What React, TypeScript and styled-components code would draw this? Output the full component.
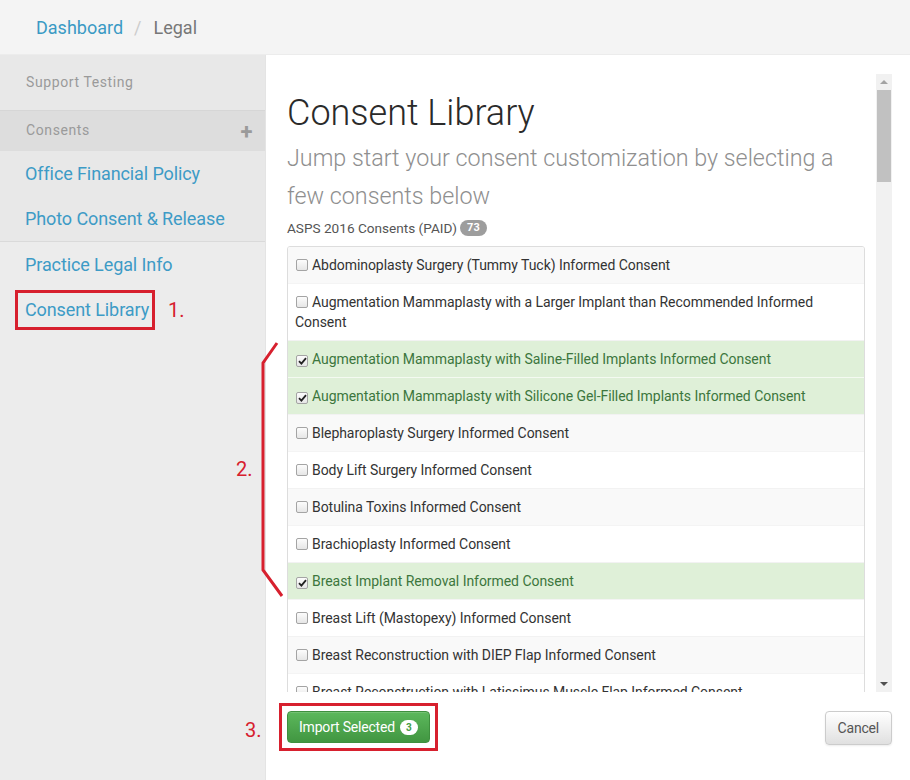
import styled, { createGlobalStyle } from "styled-components";

const GlobalStyle = createGlobalStyle`
  html, body {
    margin: 0;
    padding: 0;
    background: #ffffff;
  }
  body {
    font-family: Roboto, "Liberation Sans", sans-serif;
    color: #333333;
  }
  * {
    box-sizing: border-box;
  }
`;

const annotationRed = "#d7202e";

const Page = styled.div`
  position: relative;
  width: 910px;
  height: 780px;
  overflow: hidden;
  display: flex;
  flex-direction: column;
`;

const TopBar = styled.div`
  height: 55px;
  flex-shrink: 0;
  background: #f4f4f4;
  border-bottom: 1px solid #ececec;
  display: flex;
  align-items: center;
  padding-left: 36px;
  font-size: 18px;
`;

const Crumb = styled.span<{ $active?: boolean }>`
  color: ${(p) => (p.$active ? "#777777" : "#3a9ac4")};
`;

const CrumbSep = styled.span`
  color: #cccccc;
  padding: 0 12px 0 11px;
`;

const Body = styled.div`
  flex: 1;
  display: flex;
  min-height: 0;
`;

const Sidebar = styled.nav`
  width: 266px;
  flex-shrink: 0;
  background: #ececec;
  border-right: 1px solid #e4e4e4;
`;

const OrgName = styled.div`
  height: 56px;
  display: flex;
  align-items: center;
  padding: 0 0 2px 26px;
  font-size: 14px;
  letter-spacing: 0.6px;
  color: #9a9a9a;
  background: #e8e8e8;
  border-bottom: 1px solid #d6d6d6;
`;

const SectionHeader = styled.div`
  height: 40px;
  display: flex;
  align-items: center;
  justify-content: space-between;
  padding: 0 12px 3px 26px;
  font-size: 14px;
  letter-spacing: 0.6px;
  color: #9a9a9a;
  background: #dddddd;
`;

const Plus = styled.span`
  font-size: 22px;
  font-weight: 700;
  color: #9a9a9a;
  line-height: 1;
  margin-top: 4px;
`;

const NavGroup = styled.div<{ $shaded?: boolean }>`
  background: ${(p) => (p.$shaded ? "#e8e8e8" : "transparent")};
  border-bottom: ${(p) => (p.$shaded ? "1px solid #dadada" : "none")};
`;

const NavItem = styled.div`
  height: 45px;
  display: flex;
  align-items: center;
  padding-left: 25px;
  font-size: 18px;
  color: #3d9bc6;
  letter-spacing: -0.1px;
`;

const NavHighlight = styled.span`
  display: inline-block;
  margin-left: -10px;
  padding: 6px 3px 6px 7px;
  border: 3px solid ${annotationRed};
  line-height: 22px;
`;

const StepNumber = styled.span`
  font-size: 20px;
  color: ${annotationRed};
  margin-left: 13px;
`;

const Main = styled.main`
  flex: 1;
  display: flex;
  flex-direction: column;
  background: #ffffff;
`;

const ScrollFrame = styled.div`
  margin-top: 19px;
  margin-right: 18px;
  height: 618px;
  display: flex;
`;

const ScrollContent = styled.div`
  flex: 1;
  overflow: hidden;
  padding: 0 11px 0 21px;
`;

const Scrollbar = styled.div`
  width: 16px;
  background: #f1f1f1;
  display: flex;
  flex-direction: column;
`;

const ScrollArrow = styled.div<{ $down?: boolean }>`
  height: 16px;
  display: flex;
  align-items: center;
  justify-content: center;
  margin-top: ${(p) => (p.$down ? "auto" : "0")};

  &::before {
    content: "";
    border-left: 4px solid transparent;
    border-right: 4px solid transparent;
    ${(p) =>
      p.$down
        ? "border-top: 4px solid #505050;"
        : "border-bottom: 4px solid #a3a3a3;"}
  }
`;

const ScrollThumb = styled.div`
  height: 92px;
  margin: 0 1px;
  background: #c1c1c1;
`;

const Title = styled.h1`
  margin: 18px 0 0;
  font-size: 36px;
  font-weight: 300;
  line-height: 42px;
  color: #2a2a2a;
`;

const Lead = styled.p`
  margin: 5px 0 0;
  padding-right: 24px;
  font-size: 23.3px;
  font-weight: 300;
  line-height: 38px;
  color: #8f8f8f;
`;

const GroupLabel = styled.div`
  margin-top: 5px;
  font-size: 13.6px;
  color: #555555;
  display: flex;
  align-items: center;
  gap: 3px;
`;

const CountBadge = styled.span<{ $inverse?: boolean }>`
  display: inline-block;
  min-width: 18px;
  padding: 0 ${(p) => (p.$inverse ? "5px" : "7px")};
  border-radius: 9px;
  font-size: ${(p) => (p.$inverse ? "10px" : "11px")};
  line-height: ${(p) => (p.$inverse ? "15px" : "16px")};
  font-weight: 700;
  text-align: center;
  background: ${(p) => (p.$inverse ? "#ffffff" : "#9d9d9d")};
  color: ${(p) => (p.$inverse ? "#449d44" : "#ffffff")};
`;

const ConsentList = styled.div`
  margin-top: 10px;
  border: 1px solid #dddddd;
  border-radius: 3px;
  overflow: hidden;
`;

const ConsentRow = styled.label<{ $selected?: boolean }>`
  display: block;
  padding: 8px 8px 8px 7px;
  font-size: 14px;
  line-height: 20px;
  letter-spacing: -0.05px;
  border-top: 1px solid #f2f2f2;
  color: ${(p) => (p.$selected ? "#3c763d" : "#333333")};
  background: ${(p) => (p.$selected ? "#dff0d8" : "#ffffff")};

  &:first-child {
    border-top: none;
    padding-top: 8px;
  }
  &:nth-child(odd) {
    background: ${(p) => (p.$selected ? "#dff0d8" : "#f9f9f9")};
  }
  &:nth-child(even) {
    border-top-color: ${(p) => (p.$selected ? "#f4faf1" : "#f4f4f4")};
  }
`;

const Box = styled.span`
  display: inline-flex;
  align-items: center;
  justify-content: center;
  vertical-align: -1px;
  width: 12px;
  height: 12px;
  margin: 0 4px 0 1px;
  border: 1px solid #a4a4a4;
  border-radius: 2px;
  background: linear-gradient(#fcfcfc, #e6e6e6);
`;

const Footer = styled.div`
  display: flex;
  justify-content: space-between;
  align-items: flex-start;
  padding: 19px 18px 0 21px;
`;

const ButtonHighlight = styled.div`
  margin: -8px 0 0 -8px;
  padding: 5px;
  border: 3px solid ${annotationRed};
`;

const Button = styled.button<{ $variant?: "success" | "default" }>`
  display: inline-flex;
  align-items: center;
  gap: 5px;
  height: ${(p) => (p.$variant === "success" ? "32px" : "34px")};
  padding: 0 ${(p) => (p.$variant === "success" ? "11px" : "12px")};
  font-family: Roboto, "Liberation Sans", sans-serif;
  font-size: 14px;
  letter-spacing: -0.2px;
  border-radius: 4px;
  cursor: pointer;
  ${(p) =>
    p.$variant === "success"
      ? `
    color: #ffffff;
    border: 1px solid #3e8f3e;
    background: linear-gradient(#5cb85c, #419641);
    box-shadow: inset 0 1px 0 rgba(255,255,255,0.15);
  `
      : `
    color: #555555;
    border: 1px solid #cccccc;
    background: linear-gradient(#ffffff, #e0e0e0);
    box-shadow: 0 1px 2px rgba(0,0,0,0.08);
  `}
`;

const Bracket = styled.svg`
  position: absolute;
  left: 255px;
  top: 338px;
`;

const FloatingNumber = styled.span<{ $x: number; $y: number }>`
  position: absolute;
  left: ${(p) => p.$x}px;
  top: ${(p) => p.$y}px;
  font-size: 20px;
  color: ${annotationRed};
  line-height: 24px;
`;

const Check = () => (
  <svg width="9" height="8" viewBox="0 0 9 8">
    <path d="M1 4.2 L3.4 6.6 L8 1.2" fill="none" stroke="#222" strokeWidth="1.8" />
  </svg>
);

const consents: { name: string; selected?: boolean }[] = [
  { name: "Abdominoplasty Surgery (Tummy Tuck) Informed Consent" },
  { name: "Augmentation Mammaplasty with a Larger Implant than Recommended Informed Consent" },
  { name: "Augmentation Mammaplasty with Saline-Filled Implants Informed Consent", selected: true },
  { name: "Augmentation Mammaplasty with Silicone Gel-Filled Implants Informed Consent", selected: true },
  { name: "Blepharoplasty Surgery Informed Consent" },
  { name: "Body Lift Surgery Informed Consent" },
  { name: "Botulina Toxins Informed Consent" },
  { name: "Brachioplasty Informed Consent" },
  { name: "Breast Implant Removal Informed Consent", selected: true },
  { name: "Breast Lift (Mastopexy) Informed Consent" },
  { name: "Breast Reconstruction with DIEP Flap Informed Consent" },
  { name: "Breast Reconstruction with Latissimus Muscle Flap Informed Consent" },
  { name: "Breast Reconstruction with Tissue Expanders Informed Consent" },
  { name: "Breast Reduction Surgery Informed Consent" },
];

const App = () => {
  const selectedCount = consents.filter((c) => c.selected).length;

  return (
    <>
      <GlobalStyle />
      <Page>
        <TopBar>
          <Crumb>Dashboard</Crumb>
          <CrumbSep>/</CrumbSep>
          <Crumb $active>Legal</Crumb>
        </TopBar>
        <Body>
          <Sidebar>
            <OrgName>Support Testing</OrgName>
            <SectionHeader>
              Consents
              <Plus>+</Plus>
            </SectionHeader>
            <NavGroup $shaded>
              <NavItem>Office Financial Policy</NavItem>
              <NavItem>Photo Consent &amp; Release</NavItem>
            </NavGroup>
            <NavGroup>
              <NavItem>Practice Legal Info</NavItem>
              <NavItem>
                <NavHighlight>Consent Library</NavHighlight>
                <StepNumber>1.</StepNumber>
              </NavItem>
            </NavGroup>
          </Sidebar>
          <Main>
            <ScrollFrame>
              <ScrollContent>
                <Title>Consent Library</Title>
                <Lead>
                  Jump start your consent customization by selecting a few
                  consents below
                </Lead>
                <GroupLabel>
                  ASPS 2016 Consents (PAID) <CountBadge>73</CountBadge>
                </GroupLabel>
                <ConsentList>
                  {consents.map((c) => (
                    <ConsentRow key={c.name} $selected={c.selected}>
                      <Box>{c.selected && <Check />}</Box>
                      {c.name}
                    </ConsentRow>
                  ))}
                </ConsentList>
              </ScrollContent>
              <Scrollbar>
                <ScrollArrow />
                <ScrollThumb />
                <ScrollArrow $down />
              </Scrollbar>
            </ScrollFrame>
            <Footer>
              <ButtonHighlight>
                <Button $variant="success">
                  Import Selected <CountBadge $inverse>{selectedCount}</CountBadge>
                </Button>
              </ButtonHighlight>
              <Button>Cancel</Button>
            </Footer>
          </Main>
        </Body>

        <Bracket width="32" height="264" viewBox="0 0 32 264">
          <path
            d="M22 5 L8 25 L8 232 L27 258"
            fill="none"
            stroke={annotationRed}
            strokeWidth="3"
          />
        </Bracket>
        <FloatingNumber $x={236} $y={457}>
          2.
        </FloatingNumber>
        <FloatingNumber $x={245} $y={718}>
          3.
        </FloatingNumber>
      </Page>
    </>
  );
};

export default App;
